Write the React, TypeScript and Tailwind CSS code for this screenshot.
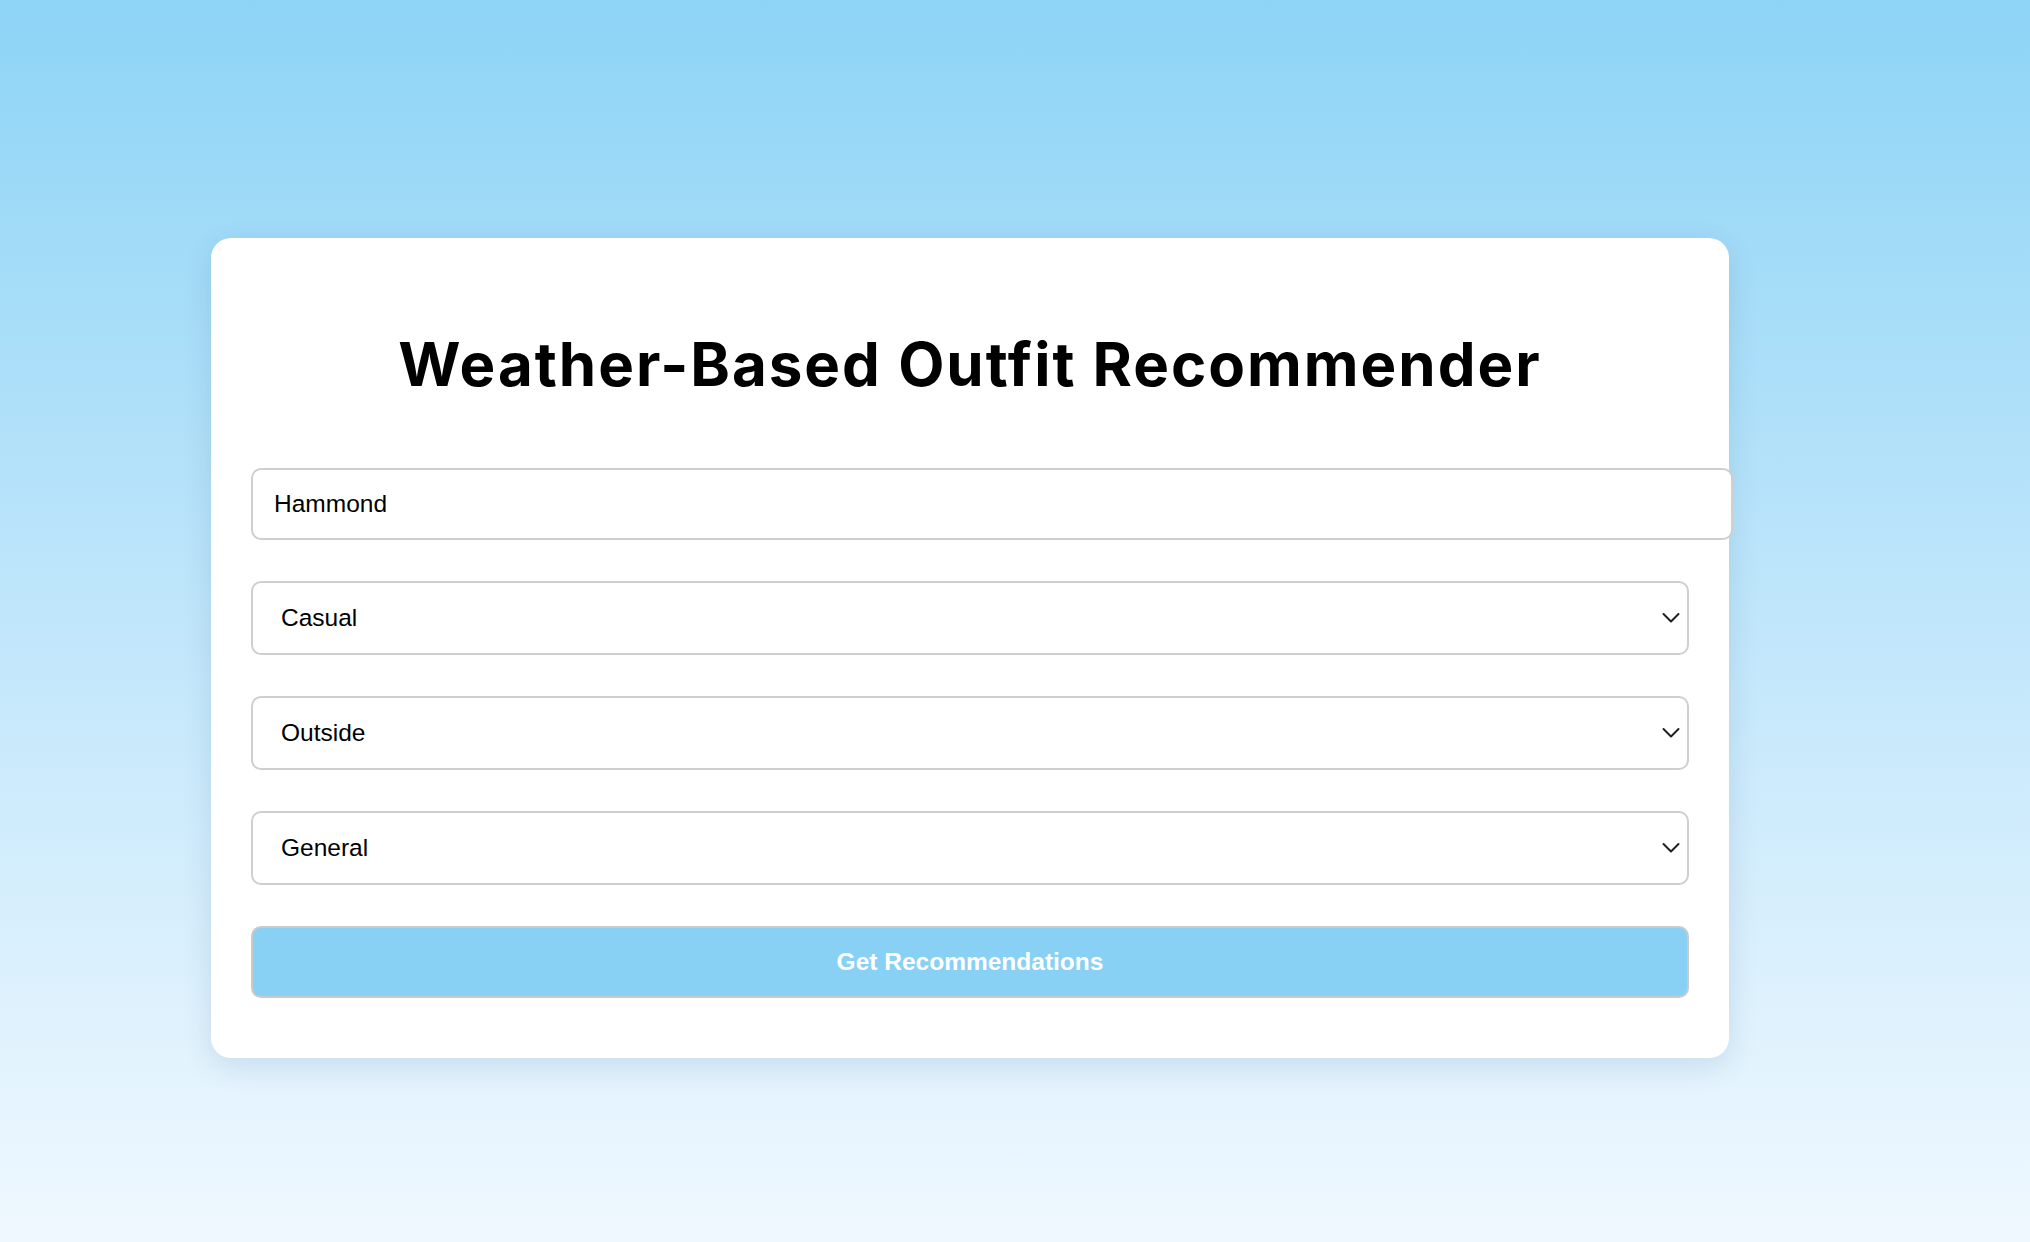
import React from "react";

const Chevron = () => (
  <svg
    className="pointer-events-none absolute right-[9px] top-1/2 -translate-y-1/2"
    width="18"
    height="11"
    viewBox="0 0 18 11"
    fill="none"
  >
    <polyline points="1.5,1.5 9,9 16.5,1.5" stroke="#1f1f1f" strokeWidth="2" strokeLinecap="round" strokeLinejoin="round" />
  </svg>
);

const Select = ({ value, className }: { value: string; className: string }) => (
  <div className={"relative w-[1438px] " + className}>
    <select
      defaultValue={value}
      className="block h-[74px] w-full appearance-none rounded-[10px] border-2 border-[#cfcfcf] bg-white pl-[28px] text-[24.5px] text-black outline-none"
      style={{ fontFamily: '"Liberation Sans", Arial, sans-serif' }}
    >
      <option>{value}</option>
    </select>
    <Chevron />
  </div>
);

export default function App() {
  return (
    <div className="min-h-screen w-full bg-gradient-to-b from-[#8DD4F6] to-[#F0F8FF] pl-[211px] pt-[238px]">
      <div className="w-[1518px] rounded-[20px] bg-white px-[40px] pt-[40px] pb-[60px] shadow-[0_8px_30px_rgba(0,60,100,0.12)]">
        <h1
          className="mt-[56px] mb-[74px] text-center text-[60px] font-bold leading-none tracking-[2px] text-black"
          style={{ fontFamily: 'Inter, "Noto Sans", sans-serif' }}
        >
          Weather-Based Outfit Recommender
        </h1>
        <input
          defaultValue="Hammond"
          className="block h-[72px] w-[1482px] rounded-[10px] border-2 border-[#cfcfcf] bg-white px-[21px] text-[24.5px] text-black outline-none"
          style={{ fontFamily: '"Liberation Sans", Arial, sans-serif' }}
        />
        <Select value="Casual" className="mt-[41px]" />
        <Select value="Outside" className="mt-[41px]" />
        <Select value="General" className="mt-[41px]" />
        <button
          className="mt-[41px] block h-[72px] w-[1438px] rounded-[10px] border-2 border-[#cacaca] bg-[#88D1F5] text-[24.5px] font-bold text-white"
          style={{ fontFamily: '"Liberation Sans", Arial, sans-serif' }}
        >
          Get Recommendations
        </button>
      </div>
    </div>
  );
}
